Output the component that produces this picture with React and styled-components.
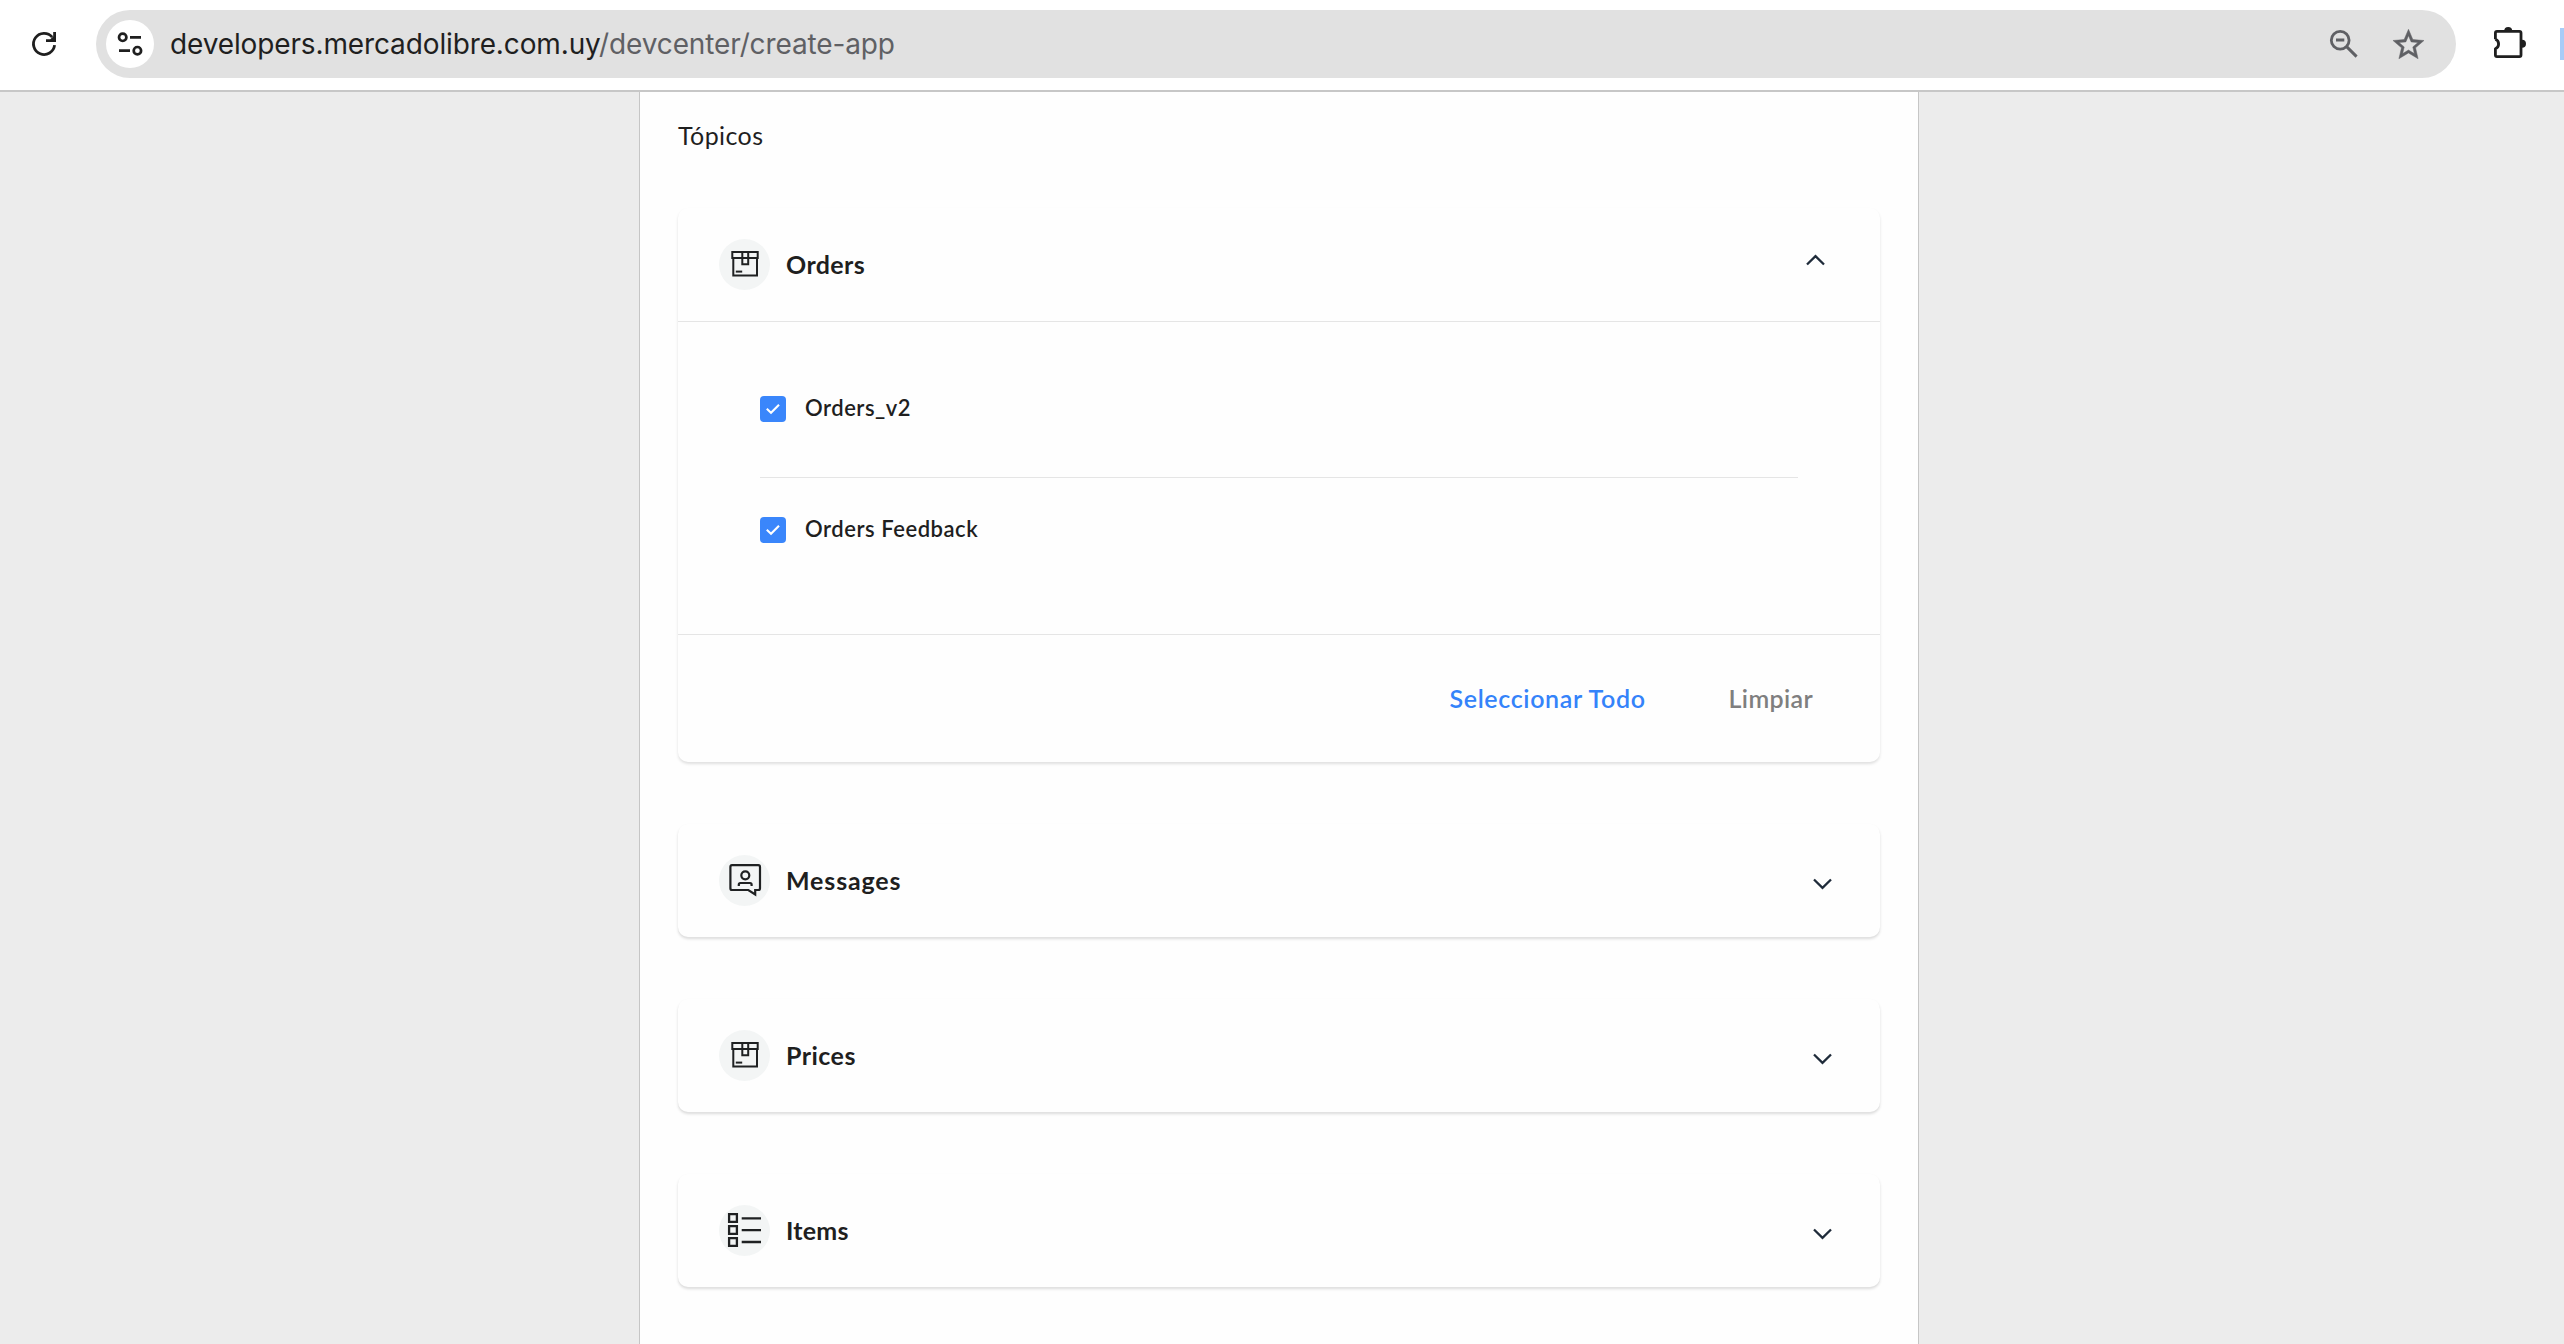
import React, { useState } from "react";
import styled, { createGlobalStyle } from "styled-components";

const GlobalStyle = createGlobalStyle`
  *, *::before, *::after { box-sizing: border-box; }
  body {
    margin: 0;
    background: #ececec;
    color: #1f1f1f;
    font-family: Lato, "Open Sans", sans-serif;
    overflow: hidden;
  }
  svg { display: block; flex: none; overflow: visible; }
  button { font: inherit; background: none; border: 0; padding: 0; margin: 0; color: inherit; }
`;

const Window = styled.div`
  display: flex;
  flex-direction: column;
  width: 2564px;
  height: 1344px;
  overflow: hidden;
`;

const Toolbar = styled.header`
  display: flex;
  align-items: center;
  flex: none;
  height: 92px;
  padding: 0 0 2px 32px;
  background: #fff;
  border-bottom: 2px solid #c7c7c7;
`;

const AddressBar = styled.div`
  display: flex;
  align-items: center;
  width: 2360px;
  height: 68px;
  margin: 0 38px 0 40px;
  padding: 0 32px 0 10px;
  border-radius: 34px;
  background: #e1e1e1;
`;

const SiteControls = styled.span`
  display: flex;
  align-items: center;
  justify-content: center;
  width: 48px;
  height: 48px;
  margin-right: 16px;
  border-radius: 50%;
  background: #fff;
`;

const Url = styled.div`
  flex: 1;
  font-family: Inter, sans-serif;
  font-size: 28px;
  line-height: 34px;
  letter-spacing: -0.13px;
  white-space: nowrap;
  color: #1f1f1f;
`;

const UrlPath = styled.span`
  color: #5f6064;
`;

const BarIcons = styled.div`
  display: flex;
  align-items: center;
  gap: 35px;
`;

const Extensions = styled.span`
  margin-bottom: 4px;
`;

const Avatar = styled.span`
  width: 4px;
  height: 32px;
  margin-left: 34px;
  background: #a8ccf8;
`;

const Column = styled.main`
  flex: 1;
  width: 1280px;
  margin-left: 639px;
  padding: 28px 38px 0;
  background: #fefefe;
  border: solid #c6c6c6;
  border-width: 0 1px;
`;

const Title = styled.h2`
  height: 30px;
  margin: 0 0 58px;
  font-size: 25px;
  line-height: 30px;
  font-weight: 400;
  letter-spacing: 0.4px;
`;

const Cards = styled.div`
  display: flex;
  flex-direction: column;
  gap: 62px;
`;

const Card = styled.section`
  border-radius: 10px;
  background: #fefefe;
  box-shadow: ${(p) =>
    p.$open
      ? "0 2px 3px 0 rgba(0, 0, 0, 0.12)"
      : "0 1px 0 0 #e2e2e2, 0 2px 3px 0 rgba(0, 0, 0, 0.14)"};
`;

const CardHeader = styled.div`
  display: flex;
  align-items: center;
  height: ${(p) => (p.$open ? 114 : 113)}px;
  padding: 0 ${(p) => (p.$open ? 55 : 48)}px 0 41px;
  border-bottom: ${(p) => (p.$open ? "1px solid #e5e5e5" : "none")};
`;

const IconDisc = styled.span`
  width: 51px;
  height: 51px;
  margin-right: 16px;
  border-radius: 50%;
  background: #f3f5f5;
`;

const CardTitle = styled.h3`
  flex: 1;
  margin: 0;
  padding-bottom: 2px;
  font-size: 25px;
  line-height: 30px;
  font-weight: 700;
  letter-spacing: ${(p) => p.$spacing}px;
`;

const Chevron = styled.button`
  transform: translateY(${(p) => (p.$open ? -4.5 : 3.5)}px);
`;

const Options = styled.ul`
  margin: 0;
  padding: 34px 82px 36px;
  list-style: none;
`;

const Option = styled.li`
  display: flex;
  align-items: flex-start;
  height: 121px;
  padding-top: 40px;

  & + & {
    padding-top: 39px;
    border-top: 1px solid #e5e5e5;
  }
`;

const Checkbox = styled.button`
  width: 26px;
  height: 26px;
  margin-right: 19px;
  border-radius: 4px;
  background: #3a86fb;
`;

const OptionLabel = styled.span`
  font-size: 22px;
  line-height: 24px;
  font-weight: 600;
  letter-spacing: ${(p) => p.$spacing}px;
`;

const CardFooter = styled.footer`
  display: flex;
  align-items: center;
  justify-content: flex-end;
  gap: 83px;
  height: 128px;
  padding: 0 67px 2px 0;
  border-top: 1px solid #e5e5e5;
`;

const Action = styled.button`
  font-size: 25px;
  line-height: 30px;
  font-weight: 600;
  letter-spacing: ${(p) => p.$spacing}px;
  color: ${(p) => (p.$primary ? "#3483fa" : "#7f7f7f")};
`;

const ink = { fill: "none", stroke: "#1f2122" };

const ReloadIcon = () => (
  <svg width="24" height="24" viewBox="0 0 24 24">
    <path d="M22.6 13.2A10.6 10.6 0 1 1 20.2 5.1" fill="none" stroke="#1f1f1f" strokeWidth="2.8" />
    <path d="M24 0v10H14V7.3h4.3L21.2 4.4V0z" fill="#1f1f1f" />
  </svg>
);

const TuneIcon = () => (
  <svg width="26" height="26" viewBox="0 0 26 26" fill="none" stroke="#1f1f1f" strokeWidth="2.7">
    <circle cx="5.7" cy="6.3" r="3.7" />
    <path d="M13 6.3h11M2 19.7h11" />
    <circle cx="20.4" cy="19.7" r="3.7" />
  </svg>
);

const ZoomOutIcon = () => (
  <svg width="28" height="28" viewBox="0 0 28 28" fill="none" stroke="#5f6064">
    <circle cx="10.2" cy="10.2" r="8.9" strokeWidth="2.8" />
    <path d="M6 10h8.3M16.6 16.6l10 10" strokeWidth="2.9" />
  </svg>
);

const StarIcon = () => (
  <svg width="31" height="30" viewBox="2 2 20 19">
    <path
      fill="#5f6064"
      stroke="#5f6064"
      strokeWidth="0.3"
      d="M22 9.24l-7.19-.62L12 2 9.19 8.63 2 9.24l5.46 4.73L5.82 21 12 17.27 18.18 21l-1.63-7.03L22 9.24zM12 15.4l-3.76 2.27 1-4.28-3.32-2.88 4.38-.38L12 6.1l1.71 4.04 4.38.38-3.32 2.88 1 4.28L12 15.4z"
    />
  </svg>
);

const PuzzleIcon = () => (
  <svg width="32" height="32" viewBox="0 0 32 32">
    <path
      d="M1.4 13.2V7Q1.4 5.4 3 5.4H25.4Q27 5.4 27 7V29Q27 30.6 25.4 30.6H3Q1.4 30.6 1.4 29V22.8A5.2 5.2 0 0 0 1.4 13.2"
      fill="none"
      stroke="#1f1f1f"
      strokeWidth="2.8"
      strokeLinejoin="round"
    />
    <path d="M10.2 5a4 4 0 0 1 8 0zM28 13.8a4 4 0 0 1 0 8z" fill="#1f1f1f" />
  </svg>
);

const BoxIcon = () => (
  <svg width="51" height="51" viewBox="0 0 51 51" {...ink} strokeWidth="2">
    <path d="M13.3 13H38.7V19H13.3zM14.3 19V36.6H38V19" />
    <path d="M23.3 13V25.2H29.2V13" />
    <path d="M16.8 32.6H23.2" />
  </svg>
);

const MessageIcon = () => (
  <svg width="51" height="51" viewBox="0 0 51 51" {...ink} strokeWidth="2.2">
    <path d="M13 10.2H39.3Q41 10.2 41 12V33.2Q41 35 39.3 35H36.2V39.4L29.3 35H13Q11.4 35 11.4 33.2V12Q11.4 10.2 13 10.2z" />
    <circle cx="26.3" cy="20.3" r="4" />
    <path d="M19.8 31V29.5Q19.8 28 21.4 28H31Q32.6 28 32.6 29.5V31" />
  </svg>
);

const ListIcon = () => (
  <svg width="51" height="51" viewBox="0 0 51 51" {...ink} strokeWidth="2.3">
    <path d="M10.1 9.1h7.8v7.8h-7.8zM10.1 21.1h7.8v7.8h-7.8zM10.1 33.1h7.8v7.8h-7.8z" />
    <path d="M22.7 13.3H42M22.7 25.1H42M22.7 37H42" />
  </svg>
);

const ChevronIcon = ({ up }) => (
  <svg width="19" height="11" viewBox="0 0 19 11" fill="none" stroke="#1f2b3a" strokeWidth="2.3">
    <path d={up ? "M1 10L9.5 1.6L18 10" : "M1 1L9.5 9.4L18 1"} />
  </svg>
);

const CheckIcon = () => (
  <svg width="26" height="26" viewBox="0 0 26 26" fill="none" stroke="#fff" strokeWidth="2.1">
    <path d="M6.8 12.8L11 16.7L19 8.7" />
  </svg>
);

const topics = [
  {
    name: "Orders",
    Icon: BoxIcon,
    spacing: 0.4,
    options: [
      { name: "Orders_v2", spacing: 0.5 },
      { name: "Orders Feedback", spacing: 0.53 },
    ],
  },
  { name: "Messages", Icon: MessageIcon, spacing: 0.85 },
  { name: "Prices", Icon: BoxIcon, spacing: 0.45 },
  { name: "Items", Icon: ListIcon, spacing: 0.25 },
];

function TopicCard({ topic }) {
  const { name, Icon, spacing, options = [] } = topic;
  const [open, setOpen] = useState(options.length > 0);
  const [selected, setSelected] = useState(options.map((o) => o.name));
  const toggle = (o) =>
    setSelected((s) => (s.includes(o) ? s.filter((x) => x !== o) : [...s, o]));

  return (
    <Card $open={open}>
      <CardHeader $open={open}>
        <IconDisc>
          <Icon />
        </IconDisc>
        <CardTitle $spacing={spacing}>{name}</CardTitle>
        <Chevron $open={open} onClick={() => setOpen(!open)}>
          <ChevronIcon up={open} />
        </Chevron>
      </CardHeader>
      {open && (
        <>
          <Options>
            {options.map((o) => (
              <Option key={o.name}>
                <Checkbox onClick={() => toggle(o.name)}>
                  {selected.includes(o.name) && <CheckIcon />}
                </Checkbox>
                <OptionLabel $spacing={o.spacing}>{o.name}</OptionLabel>
              </Option>
            ))}
          </Options>
          <CardFooter>
            <Action $primary $spacing={0.65} onClick={() => setSelected(options.map((o) => o.name))}>
              Seleccionar Todo
            </Action>
            <Action $spacing={0.35} onClick={() => setSelected([])}>
              Limpiar
            </Action>
          </CardFooter>
        </>
      )}
    </Card>
  );
}

export default function App() {
  return (
    <Window>
      <GlobalStyle />
      <Toolbar>
        <ReloadIcon />
        <AddressBar>
          <SiteControls>
            <TuneIcon />
          </SiteControls>
          <Url>
            developers.mercadolibre.com.uy<UrlPath>/devcenter/create-app</UrlPath>
          </Url>
          <BarIcons>
            <ZoomOutIcon />
            <StarIcon />
          </BarIcons>
        </AddressBar>
        <Extensions>
          <PuzzleIcon />
        </Extensions>
        <Avatar />
      </Toolbar>
      <Column>
        <Title>Tópicos</Title>
        <Cards>
          {topics.map((topic) => (
            <TopicCard key={topic.name} topic={topic} />
          ))}
        </Cards>
      </Column>
    </Window>
  );
}
